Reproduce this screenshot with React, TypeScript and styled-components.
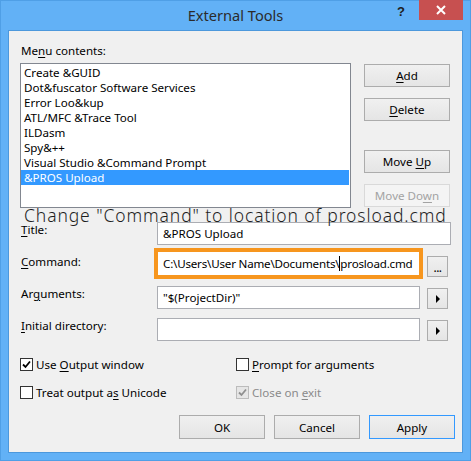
import React from 'react';
import styled, { createGlobalStyle, css } from 'styled-components';

const Global = createGlobalStyle`
  html, body { margin: 0; padding: 0; background: #ffffff; }
  body { font-family: "Noto Sans", "Open Sans", sans-serif; }
`;

const FONT = `"Noto Sans", "Open Sans", "DejaVu Sans", sans-serif`;

const Window = styled.div`
  width: 471px;
  height: 461px;
  box-sizing: border-box;
  background: #62b1f6;
  box-shadow: inset 0 0 0 1px #4f9fe6;
  display: flex;
  flex-direction: column;
  font-family: ${FONT};
  font-size: 11.6px;
  color: #000;
`;

const TitleBar = styled.div`
  height: 30px;
  display: grid;
  grid-template-columns: 1fr auto 1fr;
  align-items: start;
`;

const TitleText = styled.div`
  grid-column: 2;
  font-size: 14.6px;
  line-height: 30px;
  color: #2b2b2b;
`;

const Controls = styled.div`
  grid-column: 3;
  justify-self: end;
  display: flex;
  align-items: flex-start;
  margin-right: 8px;
`;

const HelpGlyph = styled.div`
  width: 20px;
  margin-right: 8px;
  text-align: center;
  font-family: "Liberation Sans", Arial, sans-serif;
  font-weight: bold;
  font-size: 13px;
  line-height: 24px;
  color: #202020;
`;

const CloseButton = styled.div`
  width: 44px;
  height: 20px;
  background: #c75050;
  display: flex;
  align-items: center;
  justify-content: center;
`;

const Client = styled.div`
  position: relative;
  margin: 0 8px 8px;
  flex: 1;
  box-sizing: border-box;
  background: #f0f0f0;
  border: 1px solid #4c98dc;
  display: flex;
  flex-direction: column;
  padding: 12px 0 0 0;
`;

const Mn = styled.u`
  text-decoration: underline;
  text-underline-offset: 2px;
`;

const Text = styled.span`
  white-space: pre;
`;

const GroupLabel = styled.div`
  margin-left: 12px;
  line-height: 15px;
`;

const TopRow = styled.div`
  display: flex;
  margin-top: 5px;
  margin-left: 11px;
`;

const ListBox = styled.div`
  width: 331px;
  height: 145px;
  box-sizing: border-box;
  border: 1px solid #828790;
  background: #fff;
  padding: 1px 1px 0 0;
  display: flex;
  flex-direction: column;
`;

const ListItem = styled.div<{ $selected?: boolean }>`
  height: 15px;
  line-height: 15px;
  padding-left: 3px;
  white-space: nowrap;
  ${(p) =>
    p.$selected &&
    css`
      background: #3399ff;
      color: #fff;
    `}
`;

const SideButtons = styled.div`
  display: flex;
  flex-direction: column;
  margin-left: 13px;
  margin-top: 1px;
`;

const Button = styled.div<{ $disabled?: boolean; $default?: boolean; $gap?: number; $h?: number }>`
  width: 86px;
  height: ${(p) => p.$h ?? 23}px;
  box-sizing: border-box;
  border: 1px solid #acacac;
  background: linear-gradient(#f0f0f0, #e5e5e5);
  display: flex;
  align-items: center;
  justify-content: center;
  margin-top: ${(p) => p.$gap ?? 0}px;
  ${(p) =>
    p.$disabled &&
    css`
      border-color: #d9d9d9;
      background: #f4f4f4;
      color: #a3a3a3;
    `}
  ${(p) =>
    p.$default &&
    css`
      border-color: #3399ff;
    `}
`;

const Annotation = styled.div`
  position: absolute;
  left: 15px;
  top: 173px;
  font-size: 17.5px;
  font-weight: 300;
  letter-spacing: 0.9px;
  line-height: 22px;
  color: #1e1e1e;
  white-space: nowrap;
`;

const Fields = styled.div`
  display: flex;
  flex-direction: column;
  margin-top: 14px;
  gap: 9px;
`;

const FieldRow = styled.div`
  display: flex;
  align-items: flex-start;
  height: 23px;
`;

const FieldLabel = styled.div`
  width: 136px;
  margin-left: 12px;
  line-height: 15px;
  white-space: nowrap;
`;

const TextBox = styled.div<{ $wide?: boolean; $highlight?: boolean }>`
  width: ${(p) => (p.$wide ? 294 : 263)}px;
  height: 23px;
  box-sizing: border-box;
  border: 1px solid #abadb3;
  background: #fff;
  padding-left: 5px;
  line-height: 21px;
  white-space: nowrap;
  overflow: hidden;
  ${(p) =>
    p.$highlight &&
    css`
      height: 25px;
      line-height: 23px;
      margin-top: -3px;
      padding-left: 5px;
      letter-spacing: -0.2px;
      outline: 4px solid #f7961e;
      outline-offset: -1px;
    `}
`;

const Caret = styled.span`
  border-left: 1px solid #000;
`;

const SmallButton = styled.div`
  width: 21px;
  height: 21px;
  box-sizing: border-box;
  margin-top: 2px;
  margin-left: 7px;
  border: 1px solid #acacac;
  background: linear-gradient(#f0f0f0, #e5e5e5);
  display: flex;
  align-items: center;
  justify-content: center;
  font-size: 12px;
  line-height: 12px;
`;

const Triangle = styled.span`
  width: 0;
  height: 0;
  border-top: 4px solid transparent;
  border-bottom: 4px solid transparent;
  border-left: 4px solid #000;
  margin-left: 1px;
`;

const Dots = styled.span`
  margin-top: 3px;
  letter-spacing: -0.5px;
`;

const Checks = styled.div`
  display: grid;
  grid-template-columns: 216px auto;
  row-gap: 13px;
  margin-top: 16px;
  margin-left: 11px;
`;

const CheckItem = styled.div<{ $disabled?: boolean }>`
  display: flex;
  align-items: center;
  height: 15px;
  line-height: 15px;
  white-space: nowrap;
  color: ${(p) => (p.$disabled ? '#8a8a8a' : '#000')};
`;

const Box = styled.span<{ $disabled?: boolean }>`
  width: 13px;
  height: 13px;
  box-sizing: border-box;
  border: 1px solid ${(p) => (p.$disabled ? '#bcbcbc' : '#333333')};
  background: ${(p) => (p.$disabled ? '#e6e6e6' : '#ffffff')};
  margin-right: 3px;
  display: flex;
  align-items: center;
  justify-content: center;
`;

const Footer = styled.div`
  display: flex;
  justify-content: flex-end;
  gap: 9px;
  margin-top: 15px;
  margin-right: 7px;
`;

const CheckMark = ({ color }: { color: string }) => (
  <svg width="9" height="9" viewBox="0 0 9 9">
    <path d="M1 4.5 L3.5 7 L8 1.5" fill="none" stroke={color} strokeWidth="1.8" />
  </svg>
);

const Check = ({
  checked,
  disabled,
  children,
}: {
  checked?: boolean;
  disabled?: boolean;
  children: React.ReactNode;
}) => (
  <CheckItem $disabled={disabled}>
    <Box $disabled={disabled}>{checked && <CheckMark color={disabled ? '#8f8f8f' : '#000'} />}</Box>
    <Text>{children}</Text>
  </CheckItem>
);

const items = [
  'Create &GUID',
  'Dot&fuscator Software Services',
  'Error Loo&kup',
  'ATL/MFC &Trace Tool',
  'ILDasm',
  'Spy&++',
  'Visual Studio &Command Prompt',
  '&PROS Upload',
];

export default function App() {
  return (
    <>
      <Global />
      <Window>
        <TitleBar>
          <TitleText>External Tools</TitleText>
          <Controls>
            <HelpGlyph>?</HelpGlyph>
            <CloseButton>
              <svg width="10" height="10" viewBox="0 0 10 10">
                <path d="M1 1 L9 9 M9 1 L1 9" stroke="#fff" strokeWidth="2" />
              </svg>
            </CloseButton>
          </Controls>
        </TitleBar>
        <Client>
          <GroupLabel>
            Me<Mn>n</Mn>u contents:
          </GroupLabel>
          <TopRow>
            <ListBox>
              {items.map((t, i) => (
                <ListItem key={t} $selected={i === items.length - 1}>
                  {t}
                </ListItem>
              ))}
            </ListBox>
            <SideButtons>
              <Button>
                <Text>
                  <Mn>A</Mn>dd
                </Text>
              </Button>
              <Button $gap={11}>
                <Text>
                  <Mn>D</Mn>elete
                </Text>
              </Button>
              <Button $gap={29}>
                <Text>
                  Move <Mn>U</Mn>p
                </Text>
              </Button>
              <Button $gap={11} $disabled>
                <Text>
                  Move Do<Mn>w</Mn>n
                </Text>
              </Button>
            </SideButtons>
          </TopRow>
          <Fields>
            <FieldRow>
              <FieldLabel>
                <Mn>T</Mn>itle:
              </FieldLabel>
              <TextBox $wide>&amp;PROS Upload</TextBox>
            </FieldRow>
            <FieldRow>
              <FieldLabel>
                <Mn>C</Mn>ommand:
              </FieldLabel>
              <TextBox $highlight>
                C:\Users\User Name\Documents\<Caret />prosload.cmd
              </TextBox>
              <SmallButton>
                <Dots>...</Dots>
              </SmallButton>
            </FieldRow>
            <FieldRow>
              <FieldLabel>
                Ar<Mn>g</Mn>uments:
              </FieldLabel>
              <TextBox>"$(ProjectDir)"</TextBox>
              <SmallButton>
                <Triangle />
              </SmallButton>
            </FieldRow>
            <FieldRow>
              <FieldLabel>
                <Mn>I</Mn>nitial directory:
              </FieldLabel>
              <TextBox />
              <SmallButton>
                <Triangle />
              </SmallButton>
            </FieldRow>
          </Fields>
          <Checks>
            <Check checked>
              Use <Mn>O</Mn>utput window
            </Check>
            <Check>
              <Mn>P</Mn>rompt for arguments
            </Check>
            <Check>
              Treat output a<Mn>s</Mn> Unicode
            </Check>
            <Check checked disabled>
              Close on <Mn>e</Mn>xit
            </Check>
          </Checks>
          <Footer>
            <Button $h={24}>OK</Button>
            <Button $h={24}>Cancel</Button>
            <Button $h={24} $default>
              Apply
            </Button>
          </Footer>
          <Annotation>Change "Command" to location of prosload.cmd</Annotation>
        </Client>
      </Window>
    </>
  );
}
